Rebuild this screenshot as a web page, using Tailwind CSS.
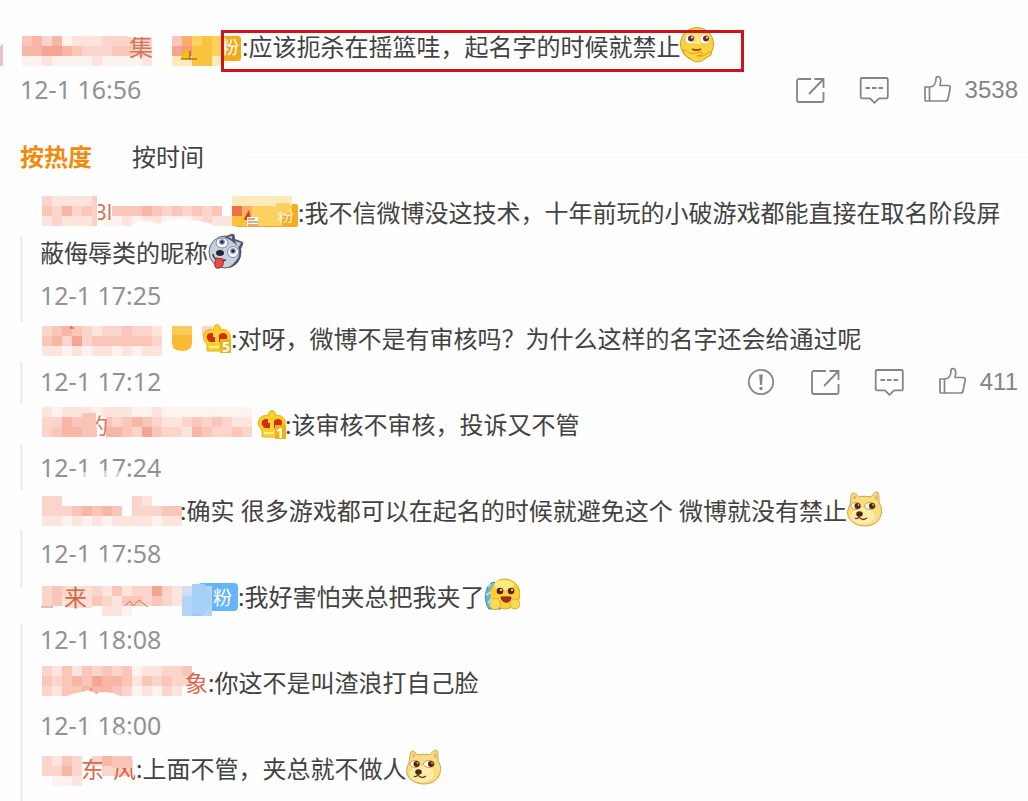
<!DOCTYPE html>
<html lang="zh-CN">

<head>
    <meta charset="UTF-8">
    <meta name="viewport" content="width=device-width, initial-scale=1.0">
    <title>微博评论</title>
    <script src="https://cdn.jsdelivr.net/npm/@tailwindcss/browser@4"></script>
</head>

<body class="bg-[#fefefe] font-['Noto_Sans','Noto_Sans_CJK_SC',sans-serif] text-2xl text-[#424242]">
    <!-- Shared icons -->
    <svg class="hidden">
        <symbol id="share" viewBox="0 0 30 30">
            <path d="M16 4H4a2 2 0 0 0-2 2v19a2 2 0 0 0 2 2h23a1.500 1.500 0 0 0 1.500-1.500V17M19.500 4h9v9M28 4.500 14 19" fill="none" stroke="#858585" stroke-width="1.800" />
        </symbol>
        <symbol id="comment" viewBox="0 0 30 30">
            <path d="M3 3h24.500a1.300 1.300 0 0 1 1.300 1.300V22a1.300 1.300 0 0 1-1.300 1.300H20l-4.500 4.500-4.500-4.500H3A1.300 1.300 0 0 1 1.700 22V4.300A1.300 1.300 0 0 1 3 3z" fill="none" stroke="#858585" stroke-width="1.800" stroke-linejoin="round" />
            <path d="M6.500 13h4.500m2 0h4.500m2 0h4.500" stroke="#858585" stroke-width="1.800" />
        </symbol>
        <symbol id="like" viewBox="0 0 30 30">
            <path d="M2 12h4.500v14H3a1 1 0 0 1-1-1zM6.500 12c4 0 6.500-3.500 6.500-8 0-2 1-2.600 2.300-2.400C17.500 2 18.500 4 17 10.500h8c1.700 0 2.500 1 2.200 2.500l-2.200 11c-.3 1.400-1 2-2.500 2h-16z" fill="none" stroke="#858585" stroke-width="1.700" stroke-linejoin="round" />
        </symbol>
        <symbol id="report" viewBox="0 0 30 30">
            <circle cx="15" cy="15" r="12.200" fill="none" stroke="#858585" stroke-width="1.800" />
            <path d="M13.200 7.500h3.600l-.8 10.500h-2z" fill="#858585" />
            <circle cx="15" cy="21.500" r="1.700" fill="#858585" />
        </symbol>
        <symbol id="crown" viewBox="0 0 30 30">
            <path d="M5 28V21C0 17 0 9 6 7c2-1 4-1 6 0a3.500 3.500 0 1 1 6 0c2-1 4-1 6 0 6 3 5 10 1 14v7z" fill="#fbcf2c" stroke="#e9b01c" stroke-width="1" />
            <path d="M8 19C3 16 4 10 9 10c2 0 3 1 4 2v7zM22 19c5-3 4-9-1-9-2 0-3 1-4 2v7z" fill="#d42d12" />
            <path d="M11 11h5.500v9h-3v-6H11z" fill="#fbd445" />
            <path d="M7 24h10" stroke="#fff0a0" stroke-width="2" />
            <path d="M18 16h11v14H18z" fill="#e8b416" />
        </symbol>
        <symbol id="doge" viewBox="0 0 36 36">
            <path d="M3 14C4 7 4 2 6 2c2 0 4 2 6 4 4-1 8-1 12 0 2-3 4-5 6-5s2 6 2 11c3 4 3 8 2 12-2 7-8 11-16 11S3 31 1 25c-1-4 0-8 2-11z" fill="#f8de80" stroke="#cda34a" stroke-width="1" />
            <path d="M6 4l1 5 3-3zM30 3l-3 4 4 3z" fill="#e3b860" />
            <ellipse cx="16" cy="25" rx="12" ry="8" fill="#fbecaa" />
            <ellipse cx="9" cy="15" rx="5" ry="3.500" fill="#fffbe9" stroke="#b88b3c" stroke-width=".8" />
            <ellipse cx="23" cy="15" rx="5.500" ry="3.500" fill="#fffbe9" stroke="#b88b3c" stroke-width=".8" />
            <circle cx="10.500" cy="15" r="3" fill="#56250f" />
            <circle cx="25" cy="15" r="3" fill="#56250f" />
            <circle cx="11.500" cy="14" r=".8" fill="#fff" />
            <circle cx="26" cy="14" r=".8" fill="#fff" />
            <ellipse cx="12.500" cy="23" rx="3.300" ry="2.800" fill="#512515" />
            <path d="M12 25c-1 3-3 3-4 2m4-1c2 3 5 3 8 1" fill="none" stroke="#6b3519" stroke-width="1.300" />
        </symbol>
    </svg>

    <main class="h-screen overflow-hidden pt-[26px] pr-[10px] pl-5">
        <!-- Top comment -->
        <article>
            <p class="pt-px pb-[2px] leading-10"><a href="#" aria-label="用户"><svg class="inline-block h-10 w-[222px] overflow-visible align-top" viewBox="0 0 222 40">
                <path d="M-20 19h1v-2h2v22h-3z" fill="#efc3c6" />
                <g data-x="2" data-y="9" data-rows="deceabbbcccbc/eeffedcccddcc/aabaaaabaaaab"></g>
                <text x="109" y="29" font-size="24" fill="#d4775c">集</text>
                <path d="M108 6h26v4h-26z" fill="#fefefe" />
                <rect x="203" y="9" width="18" height="25" rx="3" fill="#f5a81c" />
                <text x="201" y="27" font-size="18" fill="#fff">粉</text>
                <g data-x="152" data-y="9" data-rows="dozyz/fgyyz/xxyyx"></g>
                <path d="M161 31l5-10 4 7v4h-9z" fill="#eec500" />
                <path d="M170 24v9m-9-1h16" stroke="#a33d1d" />
            </svg></a>:<span class="relative">应该扼杀在摇篮哇，起名字的时候就禁止<svg class="inline-block size-9 align-top" viewBox="0 0 36 36" role="img" aria-label="思考">
                <circle cx="17" cy="17" r="16.500" fill="#f9d33e" stroke="#d79b27" />
                <ellipse cx="17" cy="10" rx="12" ry="7" fill="#ffe77b" />
                <circle cx="10" cy="12" r="5" fill="#fff" stroke="#d5aa4a" stroke-width=".6" />
                <circle cx="25" cy="12" r="5" fill="#fff" stroke="#d5aa4a" stroke-width=".6" />
                <circle cx="11" cy="11.500" r="3" fill="#6a2e14" />
                <circle cx="26" cy="11.500" r="3" fill="#6a2e14" />
                <circle cx="12" cy="10.500" r="1" fill="#fff" />
                <circle cx="27" cy="10.500" r="1" fill="#fff" />
                <path d="M12 22c4 2 7 1 9 0" fill="none" stroke="#8e4a16" stroke-width="1.500" />
                <path d="M3 23c4 0 5 3 9 4l9-2c2 0 2 2 0 3l-4 1h6l7-4c2 0 2 2 1 3l-7 4c-1 3-9 4-12 1-4-3-8-5-9-10z" fill="#fbd63f" stroke="#d99a25" />
            </svg><span class="absolute top-0 -right-7 -left-[27px] h-[42px] border-3 border-[#cc151b]"></span></span></p>
            <div class="flex h-[43px] items-center justify-between pb-[2px]">
                <time class="text-[25px] text-[#929292]">12-1 16:56</time>
                <div class="flex items-center gap-[34px] font-['Liberation_Sans',sans-serif] text-[#858585]">
                    <button aria-label="转发"><svg class="size-[30px]"><use href="#share" /></svg></button>
                    <button aria-label="评论"><svg class="size-[30px]"><use href="#comment" /></svg></button>
                    <button class="flex items-center gap-3" aria-label="赞 3538"><svg class="size-[30px]"><use href="#like" /></svg>3538</button>
                </div>
            </div>
        </article>

        <!-- Sort tabs -->
        <nav class="mt-[23px] flex h-11 items-center gap-10">
            <button class="font-bold text-[#f28a0c]">按热度</button>
            <button>按时间</button>
            <span class="-mr-[10px] h-[2px] flex-1 bg-[#fafafa]"></span>
        </nav>

        <!-- Replies -->
        <ul class="mt-[13px]">
            <li class="flex">
                <div class="flex w-[3px] shrink-0 flex-col pt-11"><span class="flex-1 bg-[#efefef]"></span></div>
                <div class="min-w-0 flex-1 pl-[17px]">
                    <p class="pt-px pb-[2px] leading-10"><a href="#" aria-label="用户"><svg class="inline-block h-10 w-[258px] overflow-visible align-top" viewBox="0 0 258 40">
                        <g data-x="2" data-y="3" data-rows="cbbbb/dcecd..dddedcdcdcd/bcbbb.aababbaaabcbb"></g>
                        <text x="53" y="27" font-size="21" fill="#d4775c">Bl</text>
                        <path d="M52 5h6v24h-6zM90 33c12-7 19-7 28-2 18-9 37-4 54 0v4H90z" fill="#fefefe" />
                        <path d="M52 3h5v30h-5z" fill="#fbd0c5" />
                        <rect x="195" y="11" width="63" height="23" rx="2" fill="#f6ab25" />
                        <g data-x="192" data-y="3" data-rows="xxxxxx/rozzzy/yyzzz."></g>
                        <text x="237" y="29" font-size="17" fill="#fff0c8">粉</text>
                        <path d="M236 10h14v9h-14z" fill="#fbd15f" />
                        <path d="M205 24l4-7 2 10h-7z" fill="#df3b17" />
                        <path d="M207 24h11v9h-11z" fill="#fff" />
                        <path d="M208 26h7m-7 3h10m-10 3h10" stroke="#b4552b" />
                    </svg></a>:我不信微博没这技术，十年前玩的小破游戏都能直接在取名阶段屏蔽侮辱类的昵称<svg class="inline-block size-9 align-top" viewBox="0 0 36 36" role="img" aria-label="二哈">
                        <circle cx="17" cy="19" r="16" fill="#c8d0dd" stroke="#59647c" />
                        <path d="M16 4c4-1 7-4 9-3 2 0 2 3 2 5l8 3c1 3-2 5-2 8 1 10-5 17-13 18 10-7 12-13 11-18-2-6-8-10-15-13z" fill="#4d5870" />
                        <path d="M27 8l6 2-3 5zM20 4l4-1v3z" fill="#d5bfc9" />
                        <ellipse cx="14" cy="10" rx="6" ry="5" fill="#f8fbff" stroke="#7a88a0" />
                        <ellipse cx="25" cy="19" rx="5.500" ry="5.500" fill="#f8fbff" stroke="#7a88a0" />
                        <circle cx="14" cy="9" r="2.800" fill="#5f80a8" />
                        <circle cx="25" cy="18" r="2.800" fill="#5f80a8" />
                        <circle cx="14" cy="9" r="1.300" fill="#192130" />
                        <circle cx="25" cy="18" r="1.300" fill="#192130" />
                        <ellipse cx="12" cy="20" rx="4" ry="3" fill="#222630" />
                        <path d="M5 21c1 6 6 8 13 6" fill="none" stroke="#333948" stroke-width="1.500" />
                        <path d="M8 25l7 1c1 4 0 9-4 9-5 1-5-3-3-10z" fill="#ec4a3c" stroke="#8e2d2b" />
                    </svg></p>
                    <div class="flex h-[43px] items-center pb-[2px]"><time class="text-[25px] text-[#929292]">12-1 17:25</time></div>
                </div>
            </li>
            <li class="flex">
                <div class="flex w-[3px] shrink-0 flex-col gap-10"><span class="h-1 bg-[#efefef]"></span><span class="flex-1 bg-[#efefef]"></span></div>
                <div class="min-w-0 flex-1 pl-[17px]">
                    <p class="pt-px pb-[2px] leading-10"><a href="#" aria-label="用户"><svg class="inline-block h-10 w-[191px] overflow-visible align-top" viewBox="0 0 191 40">
                        <g data-x="2" data-y="7" data-rows="cdedcbccdccb/decfcddddddc/bbababbababb"></g>
                        <path d="M31 7v3m2 0v-2" stroke="#9d4937" />
                        <path d="M132 7h20v17q0 8-10 8t-10-8z" fill="#f9bb31" />
                        <path d="M132 7h20v9h-20z" fill="#fbc85a" />
                        <path d="M162 7h10v10h-10z" fill="#fbd4c4" />
                        <svg x="162" y="4" width="30" height="30"><use href="#crown" /></svg>
                        <text x="182" y="33" font-size="14" font-weight="700" fill="#fff">5</text>
                    </svg></a>:对呀，微博不是有审核吗？为什么这样的名字还会给通过呢</p>
                    <div class="flex h-[43px] items-center justify-between pb-[2px]">
                        <time class="text-[25px] text-[#929292]">12-1 17:12</time>
                        <div class="flex items-center gap-[34px] font-['Liberation_Sans',sans-serif] text-[#858585]">
                            <button aria-label="举报"><svg class="size-[30px]"><use href="#report" /></svg></button>
                            <button aria-label="转发"><svg class="size-[30px]"><use href="#share" /></svg></button>
                            <button aria-label="评论"><svg class="size-[30px]"><use href="#comment" /></svg></button>
                            <button class="flex items-center gap-3" aria-label="赞 411"><svg class="size-[30px]"><use href="#like" /></svg>411</button>
                        </div>
                    </div>
                </div>
            </li>
            <li class="flex">
                <div class="flex w-[3px] shrink-0 flex-col pt-10"><span class="flex-1 bg-[#efefef]"></span></div>
                <div class="min-w-0 flex-1 pl-[17px]">
                    <p class="pt-px pb-[2px] leading-10"><a href="#" aria-label="用户"><svg class="inline-block h-10 w-[245px] overflow-visible align-top" viewBox="0 0 245 40">
                        <g data-x="2" data-y="2" data-rows="babbbabbbaabaaaaaaaaa/ccedcadcdedcbbcdcdcbb/cdeeedeedcfdccbedccdc"></g>
                        <path d="M57 12h9v20h-9z" fill="#fefefe" />
                        <text x="46" y="29" font-size="22" fill="#d4775c">的</text>
                        <path d="M42 8h14v24H42z" fill="#f9c3b6" />
                        <svg x="217" y="4" width="30" height="30"><use href="#crown" /></svg>
                        <text x="236" y="33" font-size="14" font-weight="700" fill="#fff">1</text>
                    </svg></a>:该审核不审核，投诉又不管</p>
                    <div class="relative flex h-[43px] items-center pb-[2px]"><time class="text-[25px] text-[#929292]">12-1 17:24</time>
                        <svg class="absolute top-0 left-0 h-10 w-32" viewBox="0 0 128 40"><path d="M42 25h10v6H42zM62 25q12-6 20 1v5H62z" fill="#fefefe" opacity=".6" /></svg>
                    </div>
                </div>
            </li>
            <li class="flex">
                <div class="flex w-[3px] shrink-0 flex-col pt-10"><span class="flex-1 bg-[#efefef]"></span></div>
                <div class="min-w-0 flex-1 pl-[17px]">
                    <p class="pt-px pb-[2px] leading-10"><a href="#" aria-label="用户"><svg class="inline-block h-10 w-[140px] overflow-visible align-top" viewBox="0 0 140 40">
                        <g data-x="2" data-y="5" data-rows="cc.......cb.../cccdeded.cccdd/bbabababbbbabb"></g>
                    </svg></a>:确实 很多游戏都可以在起名的时候就避免这个 微博就没有禁止<svg class="inline-block size-9 align-top" role="img" aria-label="doge"><use href="#doge" /></svg></p>
                    <div class="relative flex h-[43px] items-center pb-[2px]"><time class="text-[25px] text-[#929292]">12-1 17:58</time>
                        <svg class="absolute top-0 left-0 h-10 w-32" viewBox="0 0 128 40"><path d="M42 28h10v4H42zM62 28h20v4H62z" fill="#fefefe" opacity=".6" /></svg>
                    </div>
                </div>
            </li>
            <li class="flex">
                <div class="flex w-[3px] shrink-0 flex-col gap-9"><span class="h-3 bg-[#efefef]"></span><span class="flex-1 bg-[#efefef]"></span></div>
                <div class="min-w-0 flex-1 pl-[17px]">
                    <p class="pt-px pb-[2px] leading-10"><a href="#" aria-label="用户"><svg class="inline-block h-10 w-[198px] overflow-visible align-top" viewBox="0 0 198 40">
                        <g data-x="2" data-y="9" data-rows="cdccccbdbccfcb/cdbdddcbddcdcb/......bba....."></g>
                        <path d="M26 9h26v22H26z" fill="#fdded5" />
                        <text x="24" y="29" font-size="23" fill="#cf6a4c">来</text>
                        <path d="M1 30h12m72-1 5-5 3 5 6-6 9 7" fill="none" stroke="#d4775c" />
                        <rect x="158" y="6" width="40" height="28" rx="4" fill="#67b5f7" />
                        <g data-x="142" data-y="9" data-rows="hii/iji/iji"></g>
                        <path d="M152 7h12l7 9-1 12-6 9h-12z" fill="#a6cffa" />
                        <text x="173" y="28" font-size="19" fill="#fff">粉</text>
                    </svg></a>:我好害怕夹总把我夹了<svg class="inline-block size-9 align-top" viewBox="0 0 36 36" role="img" aria-label="抱抱">
                        <path d="M7 6c-7 5-7 20-2 26h12L11 5z" fill="#5abbdc" stroke="#3091b8" />
                        <circle cx="21" cy="17" r="15" fill="#f9cf37" stroke="#e0a52b" />
                        <ellipse cx="20" cy="8" rx="10" ry="5" fill="#ffeb79" />
                        <circle cx="16" cy="14" r="3.300" fill="#552712" />
                        <circle cx="27" cy="14" r="3.300" fill="#552712" />
                        <circle cx="17" cy="13" r="1" fill="#fff" />
                        <circle cx="28" cy="13" r="1" fill="#fff" />
                        <path d="M17 20h10c0 7-9 7-10 0z" fill="#b72720" stroke="#6f2b16" />
                        <circle cx="11" cy="27" r="5.500" fill="#fbdc56" stroke="#e5a931" />
                        <circle cx="31" cy="27" r="5" fill="#fbdc56" stroke="#e5a931" />
                        <path d="M4 10l3-3M2 18l5-3M4 26l4-5" stroke="#bce9f5" stroke-width="1.500" />
                    </svg></p>
                    <div class="flex h-[43px] items-center pb-[2px]"><time class="text-[25px] text-[#929292]">12-1 18:08</time></div>
                </div>
            </li>
            <li class="flex">
                <div class="w-[3px] shrink-0 bg-[#efefef]"></div>
                <div class="min-w-0 flex-1 pl-[17px]">
                    <p class="pt-px pb-[2px] leading-10"><a href="#" aria-label="用户"><svg class="inline-block h-10 w-[168px] overflow-visible align-top" viewBox="0 0 168 40">
                        <g data-x="2" data-y="3" data-rows="cbdbdcdcdabbccd/dcdedfeedbdcdcc/cbddeeedcabacb."></g>
                        <text x="145" y="29" font-size="23" fill="#d9694e">象</text>
                        <path d="M27 33c8-4 15-3 20-6 10 5 20-1 33 6v3H27z" fill="#fefefe" />
                        <path d="M51 25v3m4 2h3" stroke="#c96a4f" />
                    </svg></a>:你这不是叫渣浪打自己脸</p>
                    <div class="relative flex h-[43px] items-center pb-[2px]"><time class="text-[25px] text-[#929292]">12-1 18:00</time>
                        <svg class="absolute top-0 left-0 h-10 w-32" viewBox="0 0 128 40"><path d="M72 28h18v4H72z" fill="#fefefe" opacity=".6" /></svg>
                    </div>
                </div>
            </li>
            <li class="flex">
                <div class="w-[3px] shrink-0 bg-[#efefef]"></div>
                <div class="min-w-0 flex-1 pl-[17px]">
                    <p class="pt-px pb-3 leading-10"><a href="#" aria-label="用户"><svg class="inline-block h-10 w-[96px] overflow-visible align-top" viewBox="0 0 96 40">
                        <g data-x="2" data-y="7" data-rows="cbdc.ceed/ccec..ccc/.aab....."></g>
                        <text x="41" y="29" font-size="23" fill="#d9694e">东</text>
                        <text x="73" y="29" font-size="23" fill="#d9694e">风</text>
                        <path d="M72 7h20v12H72z" fill="#f9c3b6" />
                    </svg></a>:上面不管，夹总就不做人<svg class="inline-block size-9 align-top" role="img" aria-label="doge"><use href="#doge" /></svg></p>
                </div>
            </li>
        </ul>
    </main>

    <script>
        // Colours of the 10px mosaic cells, one letter each; a dot leaves the cell empty
        const colors = {
            a: '#fef3ef', b: '#fde5de', c: '#fbd5cb', d: '#fac6b9', e: '#f8b6a7', f: '#f4a693',
            g: '#f49c70', o: '#f9ad6a', r: '#ef7043', x: '#fdebbb', y: '#fac33f', z: '#fbd15f',
            h: '#d4ddf8', i: '#b4d5fb', j: '#9ac8fa'
        };

        document.querySelectorAll('g[data-rows]').forEach((group) => {
            const left = Number(group.dataset.x);
            const top = Number(group.dataset.y);
            group.dataset.rows.split('/').forEach((row, y) => {
                [...row].forEach((cell, x) => {
                    if (cell === '.') return;
                    const rect = document.createElementNS('http://www.w3.org/2000/svg', 'rect');
                    rect.setAttribute('x', left + x * 10);
                    rect.setAttribute('y', top + y * 10);
                    rect.setAttribute('width', 10);
                    rect.setAttribute('height', 10);
                    rect.setAttribute('fill', colors[cell]);
                    group.appendChild(rect);
                });
            });
        });
    </script>
</body>

</html>
